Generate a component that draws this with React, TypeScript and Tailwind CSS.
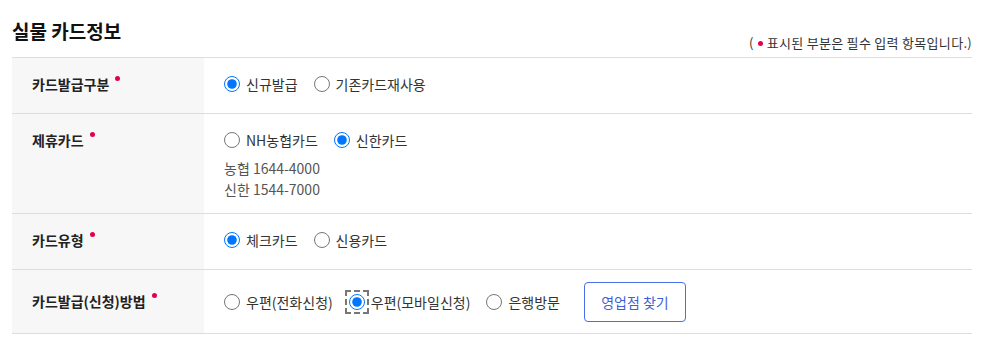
import { useState } from "react"

type Opt = { value: string; label: string }

function Radio({ name, opt, checked, focused, onChange }: { name: string; opt: Opt; checked: boolean; focused?: boolean; onChange: (v: string) => void }) {
  return (
    <label className="flex items-center cursor-pointer">
      <input
        type="radio"
        name={name}
        value={opt.value}
        checked={checked}
        onChange={() => onChange(opt.value)}
        className={
          "w-4 h-4 m-0 accent-[#0075ff] " +
          (focused ? "outline-2 outline-dashed outline-[#777] outline-offset-[2px]" : "")
        }
      />
      <span className="ml-[6px] text-[14px] leading-5 text-[#333]">{opt.label}</span>
    </label>
  )
}

function RadioGroup({ name, options, value, setValue, focusedValue }: { name: string; options: Opt[]; value: string; setValue: (v: string) => void; focusedValue?: string }) {
  return (
    <div className="flex items-center gap-4">
      {options.map(o => (
        <Radio key={o.value} name={name} opt={o} checked={value === o.value} focused={focusedValue === o.value} onChange={setValue} />
      ))}
    </div>
  )
}

function Label({ text, className }: { text: string; className: string }) {
  return (
    <div className={"w-[192px] shrink-0 bg-[#f7f7f7] pl-5 " + className}>
      <div className="flex items-start">
        <span className="text-[14px] leading-5 font-bold text-[#222]">{text}</span>
        <span className="ml-[6px] mt-[2px] w-[5px] h-[5px] rounded-full bg-[#e5004f]" />
      </div>
    </div>
  )
}

export default function App() {
  const [issue, setIssue] = useState("new")
  const [partner, setPartner] = useState("shinhan")
  const [cardType, setCardType] = useState("check")
  const [method, setMethod] = useState("mobile")

  return (
    <main className="w-[1002px] h-[342px] bg-white px-3" style={{ fontFamily: '"Noto Sans CJK KR", "Noto Sans", sans-serif' }}>
      <header className="w-[960px] flex items-end justify-between pt-[17px] pb-[4px]">
        <h2 className="text-[19px] leading-7 font-bold text-[#111] mb-[8px]">실물 카드정보</h2>
        <p className="text-[13px] leading-5 text-[#333] flex items-center tracking-[0.3px]">
          (
          <span className="mx-[4px] w-[5px] h-[5px] rounded-full bg-[#e5004f]" />
          표시된 부분은 필수 입력 항목입니다.)
        </p>
      </header>

      <div className="border-t border-[#ddd] w-[960px]">
        <div className="flex border-b border-[#ddd]">
          <Label text="카드발급구분" className="pt-[16px] pb-[19px]" />
          <div className="pl-5 pt-[16px] pb-[19px]">
            <RadioGroup
              name="issue"
              value={issue}
              setValue={setIssue}
              options={[{ value: "new", label: "신규발급" }, { value: "reuse", label: "기존카드재사용" }]}
            />
          </div>
        </div>

        <div className="flex border-b border-[#ddd]">
          <Label text="제휴카드" className="pt-[16px]" />
          <div className="pl-5 pt-[16px] pb-[13px]">
            <RadioGroup
              name="partner"
              value={partner}
              setValue={setPartner}
              options={[{ value: "nh", label: "NH농협카드" }, { value: "shinhan", label: "신한카드" }]}
            />
            <div className="mt-[8px] text-[14px] leading-[21px] text-[#555]">
              <p>농협 1644-4000</p>
              <p>신한 1544-7000</p>
            </div>
          </div>
        </div>

        <div className="flex border-b border-[#ddd]">
          <Label text="카드유형" className="pt-[16px] pb-[19px]" />
          <div className="pl-5 pt-[16px] pb-[19px]">
            <RadioGroup
              name="cardType"
              value={cardType}
              setValue={setCardType}
              options={[{ value: "check", label: "체크카드" }, { value: "credit", label: "신용카드" }]}
            />
          </div>
        </div>

        <div className="flex border-b border-[#ddd]">
          <Label text="카드발급(신청)방법" className="pt-[21px]" />
          <div className="pl-5 pt-[12px] pb-[11px] flex items-center">
            <RadioGroup
              name="method"
              value={method}
              setValue={setMethod}
              focusedValue="mobile"
              options={[
                { value: "phone", label: "우편(전화신청)" },
                { value: "mobile", label: "우편(모바일신청)" },
                { value: "bank", label: "은행방문" },
              ]}
            />
            <button className="ml-6 w-[102px] h-10 rounded border border-[#4a6ee8] text-[14px] text-[#3f5fd6] bg-white">
              영업점 찾기
            </button>
          </div>
        </div>
      </div>
    </main>
  )
}
